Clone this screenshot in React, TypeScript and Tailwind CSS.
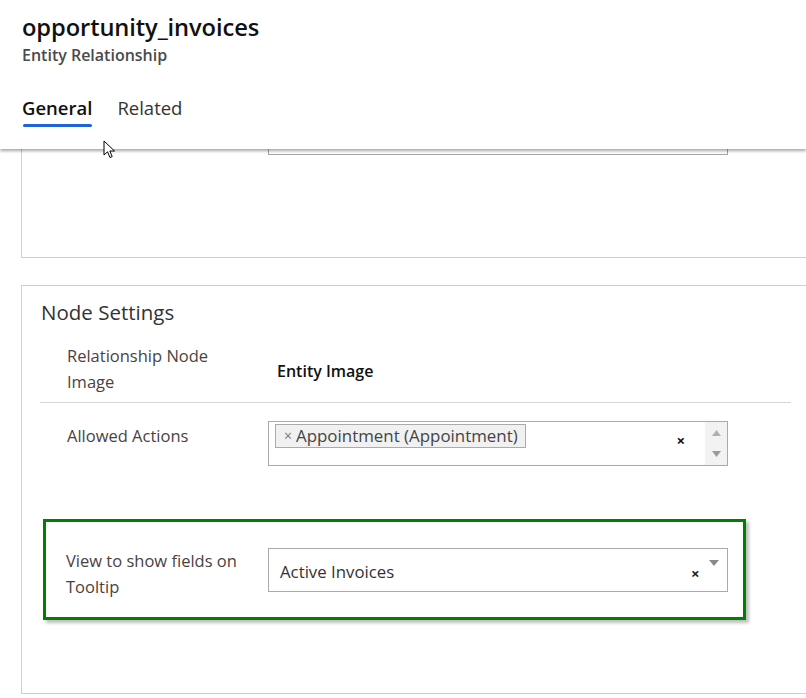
import React from "react";

function Cursor() {
  return (
    <svg
      className="absolute left-[103px] top-[140px] z-30"
      width="14"
      height="20"
      viewBox="0 0 14 20"
    >
      <path
        d="M1 1 L1 15 L4.5 11.8 L7 17.5 L9.2 16.6 L6.8 11 L11.5 11 Z"
        fill="white"
        stroke="black"
        strokeWidth="1"
        strokeLinejoin="miter"
      />
    </svg>
  );
}

export default function App() {
  return (
    <div className="relative w-[806px] h-[698px] bg-white overflow-hidden font-['Segoe_UI','Open_Sans',sans-serif]">
      <Cursor />
      {/* Header */}
      <header className="relative z-20 h-[149px] bg-white pl-[22px] pt-[11px] shadow-[0_2px_3px_rgba(0,0,0,0.35)]">
        <h1 className="text-[23.7px] leading-[32px] font-semibold text-[#111] tracking-[-0.1px]">
          opportunity_invoices
        </h1>
        <div className="text-[16px] leading-[22px] mt-[1px] font-semibold text-[#4a4a4a]">
          Entity Relationship
        </div>
        <nav className="flex mt-[30px] items-start">
          <div className="flex flex-col">
            <span className="text-[18.5px] leading-[24px] font-semibold text-[#111]">General</span>
            <span className="mt-[4px] h-[3px] w-[69px] ml-[1px] rounded-full bg-[#1f63d8]" />
          </div>
          <span className="ml-[25px] text-[18.5px] leading-[24px] text-[#333]">Related</span>
        </nav>
      </header>

      {/* Section 1 (mostly scrolled off) */}
      <section className="ml-[21px] h-[109px] border-l border-b border-[#cfcfcf]">
        <div className="ml-[246px] w-[460px] h-[6px] border-x border-b border-[#a6a6a6]" />
      </section>

      {/* Section 2 */}
      <section className="mt-[27px] ml-[21px] h-[409px] border-l border-y border-[#cfcfcf] pt-[12px]">
        <h2 className="pl-[19px] text-[20.5px] leading-[28px] text-[#333]">Node Settings</h2>

        <div className="ml-[18px] w-[751px]">
          {/* Row 1 */}
          <div className="flex items-center h-[63px] mt-[14px] border-b border-[#d6d6d6]">
            <div className="w-[228px] pl-[27px] -mt-[4px] text-[16.5px] leading-[26px] text-[#4a4242]">
              Relationship Node
              <br />
              Image
            </div>
            <div className="pl-[9px] text-[16px] font-semibold text-[#111]">Entity Image</div>
          </div>

          {/* Row 2 */}
          <div className="flex items-start mt-[18px]">
            <div className="w-[228px] pl-[27px] pt-[2px] text-[16.5px] leading-[26px] text-[#4a4242]">
              Allowed Actions
            </div>
            <div className="flex w-[460px] h-[45px] border border-[#aaaaaa]">
              <div className="flex-1 flex items-start justify-between pl-[6px] pt-[2px] pr-[20px]">
                <div className="flex items-center h-[24px] pl-[8px] pr-[7px] bg-[#f1f1f1] border border-[#aaaaaa]">
                  <span className="text-[14px] leading-[14px] text-[#777] mr-[4px]">×</span>
                  <span className="text-[16.9px] leading-[22px] text-[#444]">Appointment (Appointment)</span>
                </div>
                <span className="mt-[7px] text-[15px] leading-[18px] font-bold text-[#111]">×</span>
              </div>
              <div className="w-[22px] bg-[#f2f2f2] flex flex-col items-center justify-between py-[8px]">
                <svg width="9" height="6" viewBox="0 0 9 6">
                  <path d="M0 6 L4.5 0 L9 6 Z" fill="#b0b0b0" />
                </svg>
                <svg width="9" height="6" viewBox="0 0 9 6">
                  <path d="M0 0 L9 0 L4.5 6 Z" fill="#9a9a9a" />
                </svg>
              </div>
            </div>
          </div>
        </div>

        {/* Highlighted row */}
        <div className="ml-[21px] mt-[53px] w-[703px] h-[101px] border-[3px] border-[#008000] shadow-[3px_3px_3px_rgba(0,0,0,0.25)] flex items-center">
          <div className="w-[222px] pl-[20px] pt-[8px] text-[16.5px] leading-[26px] text-[#4a4242]">
            View to show fields on
            <br />
            Tooltip
          </div>
          <div className="relative w-[460px] h-[44px] border border-[#aaaaaa] flex items-center pl-[11px] pt-[5px]">
            <span className="text-[16.8px] text-[#333]">Active Invoices</span>
            <span className="absolute left-[422px] top-[15px] text-[15px] leading-[18px] font-bold text-[#222]">×</span>
            <svg className="absolute left-[440px] top-[11px]" width="10" height="6" viewBox="0 0 10 6">
              <path d="M0 0 L10 0 L5 6 Z" fill="#8a8a8a" />
            </svg>
          </div>
        </div>
      </section>
    </div>
  );
}
